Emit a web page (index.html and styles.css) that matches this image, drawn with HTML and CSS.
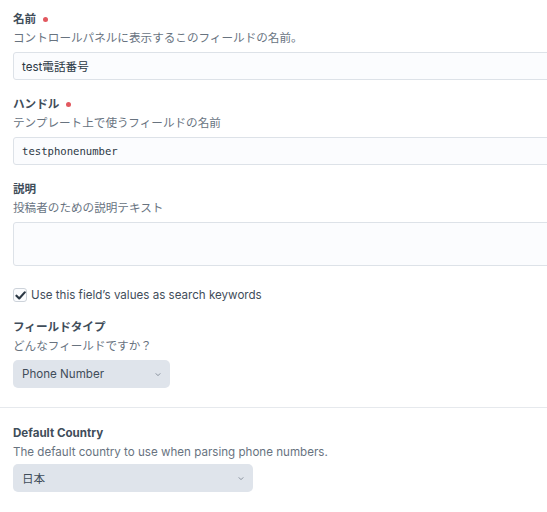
FILE: index.html
```html
<!DOCTYPE html>
<html lang="ja">
<head>
<meta charset="utf-8">
<link rel="stylesheet" href="styles.css">
</head>
<body>
<div class="page">
  <div class="fields">
    <div class="field">
      <div class="label">名前<span class="req"></span></div>
      <div class="help">コントロールパネルに表示するこのフィールドの名前。</div>
      <div class="input">test電話番号</div>
    </div>
    <div class="field">
      <div class="label">ハンドル<span class="req"></span></div>
      <div class="help">テンプレート上で使うフィールドの名前</div>
      <div class="input code">testphonenumber</div>
    </div>
    <div class="field">
      <div class="label">説明</div>
      <div class="help">投稿者のための説明テキスト</div>
      <div class="input textarea"></div>
    </div>
    <div class="check-row">
      <span class="checkbox"><svg viewBox="0 0 12 12" width="11" height="11"><path d="M1.6 6.3 L4.6 9.2 L10.6 2.6" fill="none" stroke="#2b3844" stroke-width="2.4" stroke-linecap="round" stroke-linejoin="round"/></svg></span>
      <span class="check-label">Use this field’s values as search keywords</span>
    </div>
    <div class="field">
      <div class="label">フィールドタイプ</div>
      <div class="help">どんなフィールドですか？</div>
      <div class="select small">Phone Number<svg class="chev" viewBox="0 0 8 6" width="6" height="5"><path d="M1 1.5 L4 4.5 L7 1.5" fill="none" stroke="#7d8793" stroke-width="1.2"/></svg></div>
    </div>
  </div>
  <hr class="sep">
  <div class="fields lower">
    <div class="field last">
      <div class="label">Default Country</div>
      <div class="help en">The default country to use when parsing phone numbers.</div>
      <div class="select wide">日本<svg class="chev" viewBox="0 0 8 6" width="6" height="5"><path d="M1 1.5 L4 4.5 L7 1.5" fill="none" stroke="#7d8793" stroke-width="1.2"/></svg></div>
    </div>
  </div>
</div>
</body>
</html>
```
FILE: styles.css
```css
html, body {
  margin: 0;
  padding: 0;
  overflow: hidden;
  background: #ffffff;
}
body {
  font-family: Inter, "Noto Sans CJK JP", sans-serif;
  font-size: 11.6px;
  color: #3f4d5a;
}
.page {
  width: 547px;
}
.fields {
  display: flex;
  flex-direction: column;
  padding: 9px 0 0 13px;
  width: 560px;
}
.fields.lower {
  padding-top: 15px;
}
.field {
  display: flex;
  flex-direction: column;
  margin-bottom: 14px;
}
.label {
  font-weight: 700;
  line-height: 20px;
  height: 20px;
  display: flex;
  align-items: center;
  color: #3f4d5a;
}
.req {
  width: 5px;
  height: 5px;
  border-radius: 50%;
  background: #e2585f;
  margin-left: 7px;
}
.help {
  color: #68737f;
  line-height: 18px;
  margin-bottom: 5px;
}
.help.en {
  margin-bottom: 3px;
}
.input {
  box-sizing: border-box;
  height: 28px;
  border: 1px solid #dde2e8;
  border-radius: 3px;
  background: #fbfcfe;
  padding: 0 8px;
  display: flex;
  align-items: center;
  color: #2b3844;
}
.input.code {
  font-family: "DejaVu Sans Mono", monospace;
  font-size: 10.6px;
}
.input.textarea {
  height: 44px;
}
.check-row {
  display: flex;
  align-items: center;
  gap: 4px;
  height: 20px;
  margin: 5px 0 12px;
}
.checkbox {
  box-sizing: border-box;
  width: 14px;
  height: 14px;
  border: 1px solid #cdd3da;
  border-radius: 3px;
  background: #fbfcfe;
  display: flex;
  align-items: center;
  justify-content: center;
}
.check-label {
  color: #3f4d5a;
}
.select {
  box-sizing: border-box;
  height: 28px;
  border-radius: 5px;
  background: #dfe4eb;
  padding: 0 9px;
  display: flex;
  align-items: center;
  justify-content: space-between;
  color: #3f4d5a;
}
.select.small {
  width: 157px;
}
.select.wide {
  width: 240px;
}
.sep {
  border: 0;
  border-top: 1px solid #e6e9ed;
  margin: 5px 0 0;
  height: 0;
}
.last {
  margin-bottom: 0;
}
```
